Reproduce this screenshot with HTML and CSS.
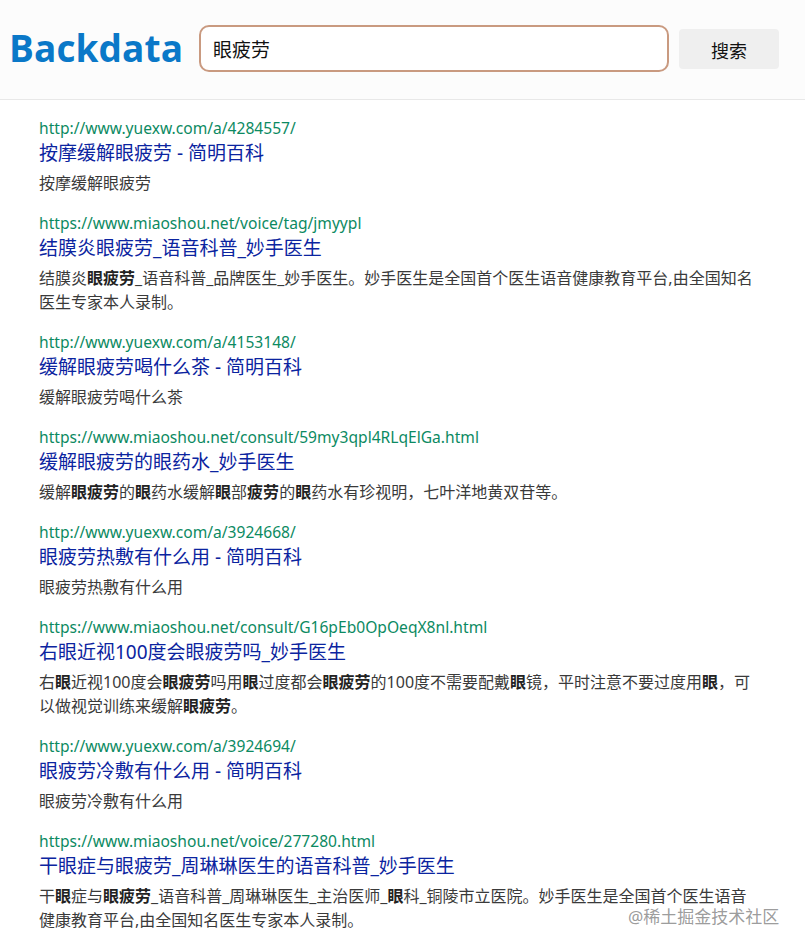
FILE: index.html
```html
<!DOCTYPE html>
<html lang="zh">
<head>
<meta charset="utf-8">
<title>Backdata</title>
<link rel="stylesheet" href="styles.css">
</head>
<body>
<header class="top">
  <div class="logo">Backdata</div>
  <input class="search" value="眼疲劳">
  <button class="btn">搜索</button>
</header>
<main class="results">
  <article class="item"><div class="url">http://www.yuexw.com/a/4284557/</div><a class="title">按摩缓解眼疲劳 - 简明百科</a><p class="desc">按摩缓解眼疲劳</p></article>
  <article class="item"><div class="url">https://www.miaoshou.net/voice/tag/jmyypl</div><a class="title">结膜炎眼疲劳_语音科普_妙手医生</a><p class="desc">结膜炎<b>眼疲劳</b>_语音科普_品牌医生_妙手医生。妙手医生是全国首个医生语音健康教育平台,由全国知名医生专家本人录制。</p></article>
  <article class="item"><div class="url">http://www.yuexw.com/a/4153148/</div><a class="title">缓解眼疲劳喝什么茶 - 简明百科</a><p class="desc">缓解眼疲劳喝什么茶</p></article>
  <article class="item"><div class="url">https://www.miaoshou.net/consult/59my3qpl4RLqElGa.html</div><a class="title">缓解眼疲劳的眼药水_妙手医生</a><p class="desc">缓解<b>眼疲劳</b>的<b>眼</b>药水缓解<b>眼</b>部<b>疲劳</b>的<b>眼</b>药水有珍视明，七叶洋地黄双苷等。</p></article>
  <article class="item"><div class="url">http://www.yuexw.com/a/3924668/</div><a class="title">眼疲劳热敷有什么用 - 简明百科</a><p class="desc">眼疲劳热敷有什么用</p></article>
  <article class="item"><div class="url">https://www.miaoshou.net/consult/G16pEb0OpOeqX8nl.html</div><a class="title">右眼近视100度会眼疲劳吗_妙手医生</a><p class="desc">右<b>眼</b>近视100度会<b>眼疲劳</b>吗用<b>眼</b>过度都会<b>眼疲劳</b>的100度不需要配戴<b>眼</b>镜，平时注意不要过度用<b>眼</b>，可以做视觉训练来缓解<b>眼疲劳</b>。</p></article>
  <article class="item"><div class="url">http://www.yuexw.com/a/3924694/</div><a class="title">眼疲劳冷敷有什么用 - 简明百科</a><p class="desc">眼疲劳冷敷有什么用</p></article>
  <article class="item"><div class="url">https://www.miaoshou.net/voice/277280.html</div><a class="title">干眼症与眼疲劳_周琳琳医生的语音科普_妙手医生</a><p class="desc">干<b>眼</b>症与<b>眼疲劳</b>_语音科普_周琳琳医生_主治医师_<b>眼</b>科_铜陵市立医院。妙手医生是全国首个医生语音健康教育平台,由全国知名医生专家本人录制。</p></article>
</main>
<div class="mark">@稀土掘金技术社区</div>
</body>
</html>
```
FILE: styles.css
```css
html, body { margin: 0; padding: 0; height: 951px; overflow: hidden; background: #fff; }
body { font-family: "Noto Sans", "Noto Sans CJK SC", sans-serif; position: relative; }
.top { height: 100px; box-sizing: border-box; display: flex; align-items: center; background: #fcfcfc; border-bottom: 1px solid #e8e8e8; padding: 0 0 3px 9px; }
.logo { font-family: "Open Sans", sans-serif; font-weight: 700; font-size: 37px; line-height: 48px; letter-spacing: .1px; color: #0a78c8; width: 190px; }
.search { width: 470px; height: 47px; box-sizing: border-box; border: 2px solid #c99a80; border-radius: 10px; background: #fff; padding: 0 12px; font: 19px "Noto Sans CJK SC", sans-serif; color: #111; outline: none; margin-right: 10px; }
.btn { width: 100px; height: 40px; margin-top: 1px; padding: 2px 0 0; border: 0; border-radius: 4px; background: #efefef; font: 18px "Noto Sans CJK SC", sans-serif; color: #111; }
.results { padding: 16px 39px 0; }
.item { margin-bottom: 16px; }
.url { font-size: 15.6px; line-height: 25px; color: #0c8a62; }
.title { display: block; font-size: 19px; line-height: 24px; color: #0b24a0; }
.desc { margin: 6px 0 0; font-size: 16px; line-height: 24px; color: #3a3a3a; width: 720px; }
.desc b { color: #222; }
.mark { position: absolute; left: 628px; top: 905px; font-size: 17px; line-height: 24px; white-space: nowrap; color: rgba(130,130,130,.8); }
```
